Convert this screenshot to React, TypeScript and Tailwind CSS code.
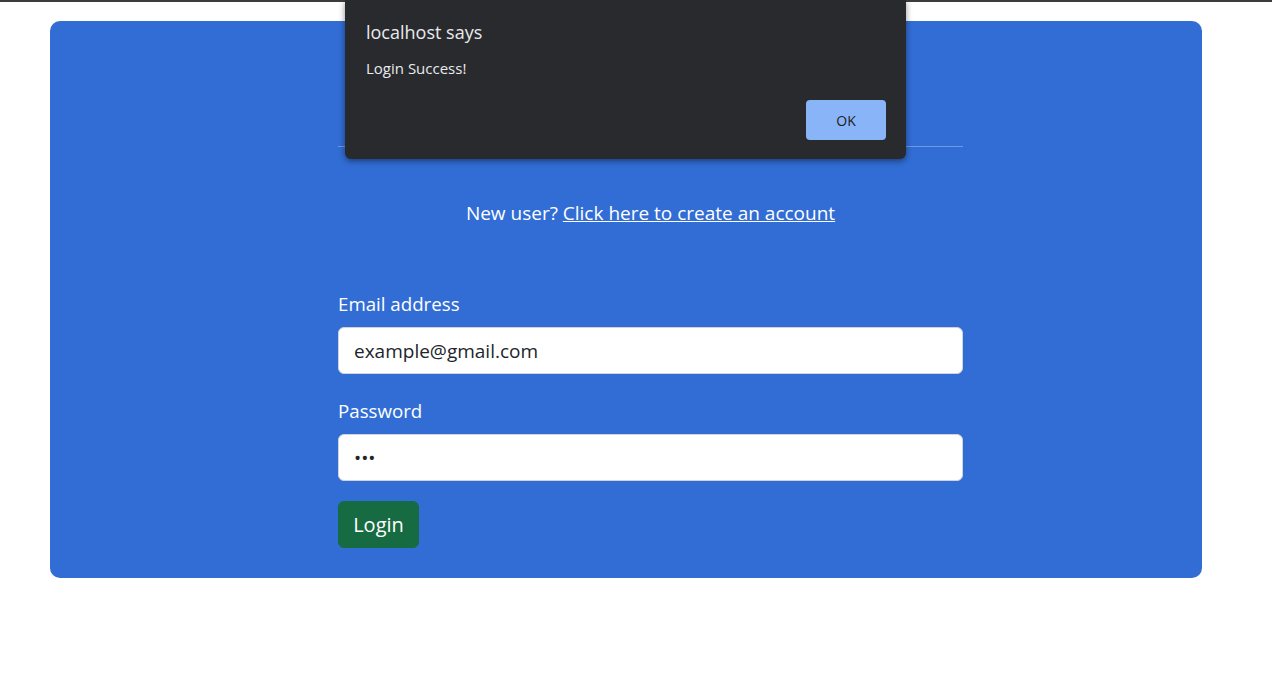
import React from "react";

const font = { fontFamily: '"Open Sans", "Noto Sans", sans-serif' };

function AlertDialog() {
  return (
    <div className="absolute left-[345px] top-0 w-[561px] h-[159px] bg-[#292a2d] rounded-b-[6px] shadow-[0_2px_6px_rgba(0,0,0,0.45)] pl-[21px] pr-[20px]">
      <div className="pt-[20px] text-[18px] leading-[24px] text-[#e8eaed]">localhost says</div>
      <div className="mt-[14px] text-[15px] leading-[20px] text-[#e8eaed]">Login Success!</div>
      <div className="flex justify-end mt-[22px]">
        <button className="w-[80px] h-[40px] rounded-[4px] bg-[#8ab4f8] text-[14px] text-[#202124]">
          OK
        </button>
      </div>
    </div>
  );
}

export default function App() {
  return (
    <div className="relative w-[1272px] h-[690px] bg-white overflow-hidden" style={font}>
      <div className="h-[2px] bg-[#3c3c3c]" />
      <div className="ml-[50px] w-[1152px] mt-[19px] bg-[#316dd5] rounded-[10px] pb-[30px]">
        <div className="w-[625px] ml-[288px]">
          <div className="h-[125px]" />
          <hr className="border-0 h-px bg-white/30" />
          <p className="mt-[53px] text-center text-[19px] leading-[27px] text-white">
            New user?{" "}
            <a href="#" className="underline">
              Click here to create an account
            </a>
          </p>
          <form className="mt-[63px]" onSubmit={(e) => e.preventDefault()}>
            <label className="block text-[18.7px] leading-[27px] text-white">Email address</label>
            <input
              type="email"
              defaultValue="example@gmail.com"
              className="mt-[10px] block w-full h-[47px] rounded-[6px] border border-[#ced4da] bg-white px-[15px] text-[19px] text-[#212529] outline-none"
            />
            <label className="block mt-[23px] text-[18.7px] leading-[27px] text-white">Password</label>
            <input
              type="password"
              defaultValue="123"
              className="mt-[10px] block w-full h-[47px] rounded-[6px] border border-[#ced4da] bg-white px-[15px] text-[19px] text-[#212529] outline-none"
            />
            <button
              type="submit"
              className="mt-[20px] w-[81px] h-[47px] rounded-[6px] border border-[#146c43] bg-[#176b42] text-[20px] text-white"
            >
              Login
            </button>
          </form>
        </div>
      </div>
      <AlertDialog />
    </div>
  );
}
